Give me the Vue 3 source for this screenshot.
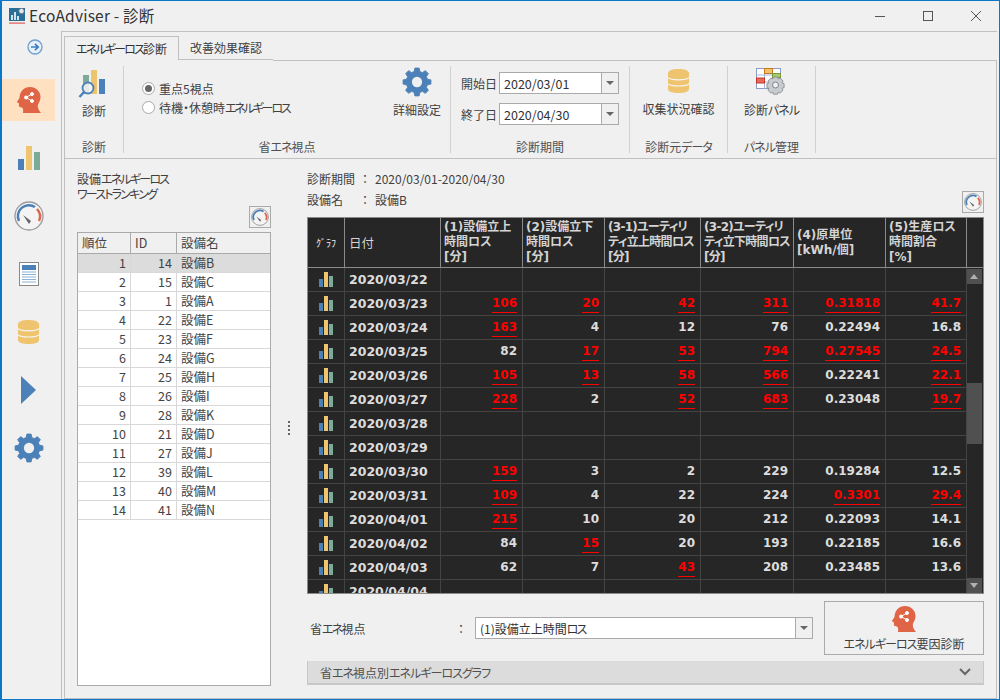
<template>
  <div class="window">
    <header class="titlebar">
      <svg class="app-logo" viewBox="0 0 16 16" width="16" height="16">
        <rect x="0" y="0" width="16" height="13" fill="#2a6f97" />
        <rect x="2" y="7" width="2" height="5" fill="#cfe3ee" />
        <rect x="5" y="4" width="2" height="8" fill="#cfe3ee" />
        <rect x="8" y="8" width="2" height="4" fill="#cfe3ee" />
        <circle cx="12.5" cy="3" r="2.6" fill="#e8e8e8" stroke="#777" stroke-width=".7" />
        <rect x="0" y="14.5" width="16" height="1.2" fill="#e05a5a" />
      </svg>
      <span class="app-title">EcoAdviser - 診断</span>
      <div class="win-btns">
        <svg viewBox="0 0 48 30" width="48" height="30"><path d="M20 15.500h10" stroke="#555" fill="none" /></svg>
        <svg viewBox="0 0 48 30" width="48" height="30"><rect x="20.500" y="10.500" width="9" height="9" stroke="#555" fill="none" /></svg>
        <svg viewBox="0 0 48 30" width="48" height="30"><path d="M20 10l10 10M30 10L20 20" stroke="#555" fill="none" /></svg>
      </div>
    </header>

    <div class="body">
      <aside class="sidebar">
        <svg class="nav-arrow" viewBox="0 0 16 16" width="16" height="16">
          <circle cx="8" cy="8" r="7" fill="#e8f0f8" stroke="#6f9fd0" stroke-width="1.3" />
          <path d="M4 8h6.5M8 4.8L11.2 8 8 11.2" fill="none" stroke="#3f7fbf" stroke-width="1.7" />
        </svg>
        <div class="nav-item active">
          <svg viewBox="0 0 26 28" width="26" height="28">
            <path :d="headPath" fill="#df6546" />
            <g fill="#fff" stroke="#fff">
              <circle cx="10" cy="11.500" r="1.500" />
              <circle cx="16" cy="8" r="1.500" />
              <circle cx="16" cy="15" r="1.500" />
              <path d="M10 11.500L16 8M10 11.500L16 15" fill="none" />
            </g>
          </svg>
        </div>
        <div class="nav-item">
          <svg viewBox="0 0 22 25" width="22" height="25">
            <rect x="0" y="13" width="6" height="11" fill="#4c80b8" />
            <rect x="8" y="0" width="6" height="24" fill="#efc46f" />
            <rect x="16" y="6" width="6" height="18" fill="#7eab97" />
          </svg>
        </div>
        <div class="nav-item">
          <svg viewBox="0 0 30 30" width="30" height="30">
            <circle cx="15" cy="15" r="14" fill="#f4f4f4" stroke="#999" stroke-width="1.300" />
            <path d="M5 20A11 11 0 0 1 21 6" fill="none" stroke="#4c80b8" stroke-width="2.500" />
            <path d="M23 8A11 11 0 0 1 25 20" fill="none" stroke="#e0654a" stroke-width="2.500" />
            <path d="M9 14l8 6-2 3z" fill="#666" />
          </svg>
        </div>
        <div class="nav-item">
          <svg viewBox="0 0 20 24" width="20" height="24">
            <rect x=".5" y=".5" width="19" height="23" fill="#fff" stroke="#888" />
            <rect x="3" y="3" width="14" height="5" fill="#4c80b8" />
            <path d="M3 10h14M3 12.500h14M3 15h14M3 17.500h14M3 20h14" stroke="#8db0d6" />
          </svg>
        </div>
        <div class="nav-item">
          <svg viewBox="0 0 24 26" width="23" height="26">
            <path d="M1 5c0-3 5-4.500 11-4.500S23 2 23 5v16c0 3-5 4.500-11 4.500S1 24 1 21z" fill="#efc46f" />
            <path d="M1 9.500c3 3 19 3 22 0M1 16c3 3 19 3 22 0" fill="none" stroke="#f5f5f5" stroke-width="1.200" />
          </svg>
        </div>
        <div class="nav-item">
          <svg viewBox="0 0 15 28" width="15" height="28"><path d="M0 0l15 14L0 28z" fill="#4c80b8" /></svg>
        </div>
        <div class="nav-item">
          <svg viewBox="0 0 32 32" width="30" height="30">
            <path :d="gearPath" fill="#4c80b8" stroke="#4c80b8" stroke-width="1" stroke-linejoin="round" />
            <circle cx="16" cy="16" r="5.500" fill="#f0f0f0" />
          </svg>
        </div>
      </aside>

      <main class="main">
        <nav class="tabs">
          <div class="tab on"><span class="ka">エネルギーロス</span>診断</div>
          <div class="tab">改善効果確認</div>
          <div class="tab-rest"></div>
        </nav>

        <section class="ribbon">
          <div class="group g1">
            <div class="group-body col">
              <svg viewBox="0 0 32 30" width="32" height="30">
                <rect x="5" y="7" width="6" height="19" fill="#7eab97" />
                <rect x="13" y="2" width="6" height="24" fill="#efc46f" />
                <rect x="21" y="11" width="6" height="15" fill="#4c80b8" />
                <circle cx="10" cy="20" r="5.500" fill="#f4f4f4" fill-opacity=".85" stroke="#4c80b8" stroke-width="1.800" />
                <path d="M6 24l-4.500 5" stroke="#4c80b8" stroke-width="2.500" />
              </svg>
              <span class="big-label">診断</span>
            </div>
            <div class="group-label">診断</div>
          </div>

          <div class="group g2">
            <div class="group-body row">
              <div class="radios">
                <label class="radio"><i class="dot on"></i>重点5視点</label>
                <label class="radio"><i class="dot"></i><span>待機・休憩時<span class="ka x">エネルギーロス</span></span></label>
              </div>
              <div class="col detail">
                <svg viewBox="0 0 32 32" width="30" height="30">
                  <path :d="gearPath" fill="#4c80b8" stroke="#4c80b8" stroke-width="1" stroke-linejoin="round" />
                  <circle cx="16" cy="16" r="5.500" fill="#f0f0f0" />
                </svg>
                <span class="big-label">詳細設定</span>
              </div>
            </div>
            <div class="group-label">省<span class="ka s">エネ</span>視点</div>
          </div>

          <div class="group g3">
            <div class="group-body dates">
              <div class="date-row">
                <span>開始日</span>
                <div class="combo date"><span class="combo-text">2020/03/01</span><i class="caret"></i></div>
              </div>
              <div class="date-row">
                <span>終了日</span>
                <div class="combo date"><span class="combo-text">2020/04/30</span><i class="caret"></i></div>
              </div>
            </div>
            <div class="group-label">診断期間</div>
          </div>

          <div class="group g4">
            <div class="group-body col">
              <svg viewBox="0 0 24 26" width="23" height="26">
                <path d="M1 5c0-3 5-4.500 11-4.500S23 2 23 5v16c0 3-5 4.500-11 4.500S1 24 1 21z" fill="#efc46f" />
                <path d="M1 9.500c3 3 19 3 22 0M1 16c3 3 19 3 22 0" fill="none" stroke="#f5f5f5" stroke-width="1.200" />
              </svg>
              <span class="big-label">収集状況確認</span>
            </div>
            <div class="group-label">診断元<span class="ka s">データ</span></div>
          </div>

          <div class="group g5">
            <div class="group-body col">
              <svg viewBox="0 0 32 28" width="32" height="28">
                <rect x=".5" y=".5" width="24" height="20" fill="#fff" stroke="#8a9cc8" />
                <path d="M.5 7h24M.5 14h24M8.500.5v20M16.500.5v20" stroke="#a8b6d8" fill="none" />
                <rect x="8.500" y=".5" width="8" height="5" fill="#f2c26b" stroke="#c8781e" />
                <rect x=".5" y="10" width="8" height="5" fill="#e8695c" stroke="#c0392b" />
                <rect x="16.500" y="5.500" width="8" height="4" fill="#a8c86a" stroke="#7a9a3a" />
                <path d="M17.500 9h4l.7 2 2-.9 2.800 2.800-.9 2 2 .7v4l-2 .7.9 2-2.800 2.800-2-.9-.7 2h-4l-.7-2-2 .9-2.800-2.800.9-2-2-.7v-4l2-.7-.9-2 2.800-2.800 2 .9z" fill="#c8ccd0" stroke="#7f858c" stroke-width=".8" />
                <circle cx="19.500" cy="17" r="3" fill="#f0f0f0" stroke="#7f858c" />
              </svg>
              <span class="big-label">診断<span class="ka s">パネル</span></span>
            </div>
            <div class="group-label"><span class="ka s">パネル</span>管理</div>
          </div>
        </section>

        <section class="content">
          <div class="left">
            <p class="left-title">設備<span class="ka">エネルギーロス</span><br /><span class="ka">ワーストランキング</span></p>
            <div class="gauge-line">
              <button class="gauge-btn" type="button">
                <svg viewBox="0 0 30 30" width="18" height="18">
                  <circle cx="15" cy="15" r="14" fill="#f4f4f4" stroke="#999" stroke-width="1.500" />
                  <path d="M5 20A11 11 0 0 1 21 6" fill="none" stroke="#4c80b8" stroke-width="3" />
                  <path d="M23 8A11 11 0 0 1 25 20" fill="none" stroke="#e0654a" stroke-width="3" />
                  <path d="M9 14l8 6-2 3z" fill="#666" />
                </svg>
              </button>
            </div>
            <div class="rank">
              <div class="rank-row head">
                <span>順位</span><span>ID</span><span>設備名</span>
              </div>
              <div v-for="(r, i) in ranks" :key="r[1]" class="rank-row" :class="{ sel: i === 0 }">
                <span class="num">{{ i + 1 }}</span><span class="num">{{ r[0] }}</span><span>{{ r[1] }}</span>
              </div>
            </div>
          </div>

          <div class="splitter"><i></i><i></i><i></i><i></i></div>

          <div class="right">
            <div class="info">
              <div class="info-row"><span class="k">診断期間</span><span class="c">：</span><span>2020/03/01-2020/04/30</span></div>
              <div class="info-row second">
                <span class="k">設備名</span><span class="c">：</span><span>設備B</span>
                <button class="gauge-btn push" type="button">
                  <svg viewBox="0 0 30 30" width="18" height="18">
                    <circle cx="15" cy="15" r="14" fill="#f4f4f4" stroke="#999" stroke-width="1.500" />
                    <path d="M5 20A11 11 0 0 1 21 6" fill="none" stroke="#4c80b8" stroke-width="3" />
                    <path d="M23 8A11 11 0 0 1 25 20" fill="none" stroke="#e0654a" stroke-width="3" />
                    <path d="M9 14l8 6-2 3z" fill="#666" />
                  </svg>
                </button>
              </div>
            </div>

            <div class="grid-wrap">
              <div class="grow ghead">
                <div class="gcell small">ｸﾞﾗﾌ</div>
                <div class="gcell">日付</div>
                <div v-for="h in heads" :key="h[0]" class="gcell" :class="{ tight: h[0].startsWith('(3') }">
                  <div>{{ h[0] }}<br />{{ h[1] }}<template v-if="h[2]"><br />{{ h[2] }}</template></div>
                </div>
                <div class="gcell"></div>
              </div>
              <div class="grid-lower">
                <div class="gbody">
                  <div v-for="row in rows" :key="row.d" class="grow">
                    <div class="gcell center">
                      <svg viewBox="0 0 14 15" width="14" height="15">
                        <rect x="0" y="7" width="4" height="8" fill="#4c80b8" />
                        <rect x="5" y="0" width="4" height="15" fill="#efc46f" />
                        <rect x="10" y="4" width="4" height="11" fill="#7eab97" />
                      </svg>
                    </div>
                    <div class="gcell date-cell">{{ row.d }}</div>
                    <div v-for="(v, n) in cells(row)" :key="n" class="gcell val">
                      <span :class="{ red: v.red }">{{ v.t }}</span>
                    </div>
                  </div>
                </div>
                <div class="scroll">
                  <div class="sbtn"><i class="up"></i></div>
                  <div class="track"><div class="thumb"></div></div>
                  <div class="sbtn"><i class="down"></i></div>
                </div>
              </div>
            </div>

            <div class="bottom">
              <span class="view-k">省<span class="ka">エネ</span>視点</span>
              <span class="view-c">：</span>
              <div class="combo view"><span class="combo-text">(1)設備立上時間<span class="ka">ロス</span></span><i class="caret"></i></div>
              <button class="cause" type="button">
                <svg viewBox="0 0 26 28" width="26" height="28">
                  <path :d="headPath" fill="#df6546" />
                  <g fill="#fff" stroke="#fff">
                    <circle cx="10" cy="11.500" r="1.500" />
                    <circle cx="16" cy="8" r="1.500" />
                    <circle cx="16" cy="15" r="1.500" />
                    <path d="M10 11.500L16 8M10 11.500L16 15" fill="none" />
                  </g>
                </svg>
                <span><span class="ka s">エネルギーロス</span>要因診断</span>
              </button>
            </div>

            <div class="expander">
              <span>省<span class="ka s">エネ</span>視点別<span class="ka s">エネルギーロスグラフ</span></span>
              <svg viewBox="0 0 12 8" width="12" height="8"><path d="M1 1l5 5 5-5" fill="none" stroke="#666" stroke-width="2" /></svg>
            </div>
          </div>
        </section>
      </main>
    </div>
  </div>
</template>

<script setup>
const ranks = [
  [14, '設備B'], [15, '設備C'], [1, '設備A'], [22, '設備E'], [23, '設備F'], [24, '設備G'], [25, '設備H'],
  [26, '設備I'], [28, '設備K'], [21, '設備D'], [27, '設備J'], [39, '設備L'], [40, '設備M'], [41, '設備N']
];

const heads = [
  ['(1)設備立上', '時間ロス', '[分]'],
  ['(2)設備立下', '時間ロス', '[分]'],
  ['(3-1)ユーティリ', 'ティ立上時間ロス', '[分]'],
  ['(3-2)ユーティリ', 'ティ立下時間ロス', '[分]'],
  ['(4)原単位', '[kWh/個]', ''],
  ['(5)生産ロス', '時間割合', '[%]']
];

// a trailing ! marks a value over its threshold
const rows = [
  { d: '2020/03/22' },
  { d: '2020/03/23', v: ['106!', '20!', '42!', '311!', '0.31818!', '41.7!'] },
  { d: '2020/03/24', v: ['163!', '4', '12', '76', '0.22494', '16.8'] },
  { d: '2020/03/25', v: ['82', '17!', '53!', '794!', '0.27545!', '24.5!'] },
  { d: '2020/03/26', v: ['105!', '13!', '58!', '566!', '0.22241', '22.1!'] },
  { d: '2020/03/27', v: ['228!', '2', '52!', '683!', '0.23048', '19.7!'] },
  { d: '2020/03/28' },
  { d: '2020/03/29' },
  { d: '2020/03/30', v: ['159!', '3', '2', '229', '0.19284', '12.5'] },
  { d: '2020/03/31', v: ['109!', '4', '22', '224', '0.3301!', '29.4!'] },
  { d: '2020/04/01', v: ['215!', '10', '20', '212', '0.22093', '14.1'] },
  { d: '2020/04/02', v: ['84', '15!', '20', '193', '0.22185', '16.6'] },
  { d: '2020/04/03', v: ['62', '7', '43!', '208', '0.23485', '13.6'] },
  { d: '2020/04/04' }
];

function cells(row) {
  const v = row.v || ['', '', '', '', '', ''];
  return v.map((s) => ({ t: s.replace('!', ''), red: s.endsWith('!') }));
}

// head profile looking left, used by the nav item and the big button
const headPath = 'M7 27c.4-3 .2-4.500-1-5.500-1.500-.4-2.500-.4-3-1.200-.3-1 .2-2.200-.2-3-.5-.5-2-.6-1.800-1.500L3.500 12C3.600 5.500 8 1 14 1c6 0 10.500 4.500 10.500 10 0 3.500-1.500 5.500-2.500 7.500-.8 2 .3 5.500 3 8.500z';

// eight tooth gear around (16,16)
function buildGear() {
  const pts = [];
  const teeth = 8;
  for (let i = 0; i < teeth; i++) {
    const a = (i / teeth) * Math.PI * 2 - Math.PI / 2;
    const step = (Math.PI * 2) / teeth;
    const list = [
      [11.5, a - step * 0.34],
      [15, a - step * 0.19],
      [15, a + step * 0.19],
      [11.5, a + step * 0.34]
    ];
    for (const [r, t] of list) {
      pts.push((16 + r * Math.cos(t)).toFixed(2) + ' ' + (16 + r * Math.sin(t)).toFixed(2));
    }
  }
  return 'M' + pts.join('L') + 'z';
}
const gearPath = buildGear();
</script>

<style>
html, body { margin: 0; background: #f0f0f0; }
</style>

<style scoped>
.window {
  width: 1000px;
  height: 700px;
  box-sizing: border-box;
  border: 1px solid #0a78c8;
  border-left-width: 2px;
  background: #f0f0f0;
  display: flex;
  flex-direction: column;
  overflow: hidden;
  font-family: "Noto Sans CJK JP", "Noto Sans", sans-serif;
  font-size: 12px;
  font-feature-settings: "palt";
  color: #404040;
}

.ka { letter-spacing: -1.8px; }
.ka.s { letter-spacing: -1px; }
.ka.x { letter-spacing: -2.2px; }

.titlebar {
  height: 30px;
  flex-shrink: 0;
  display: flex;
  align-items: center;
  padding-left: 7px;
}
.app-logo { margin-right: 4px; }
.app-title { font-size: 15.500px; color: #333; letter-spacing: 0.2px; padding-bottom: 3px; }
.win-btns { margin-left: auto; display: flex; }

.body { flex: 1; display: flex; min-height: 0; }

.sidebar {
  width: 60px;
  flex-shrink: 0;
  box-sizing: border-box;
  border-right: 1px solid #c0c0c0;
  display: flex;
  flex-direction: column;
  align-items: flex-start;
}
.nav-arrow { margin: 8px 0 0 25px; flex-shrink: 0; }
.nav-item {
  width: 53px;
  height: 58px;
  display: flex;
  align-items: center;
  justify-content: center;
  flex-shrink: 0;
}
.nav-item.active {
  height: 42px;
  background: #ffe0c0;
  margin: 24px 0 8px;
}

.main {
  flex: 1;
  margin-right: 2px;
  display: flex;
  flex-direction: column;
  min-width: 0;
  border-top: 1px solid #c0c0c0;
  padding-left: 2px;
}

.tabs { display: flex; height: 26px; flex-shrink: 0; padding-top: 2px; box-sizing: content-box; }
.tab {
  height: 24px;
  padding: 0 11px;
  line-height: 23px;
  box-sizing: border-box;
  border-bottom: 1px solid #c0c0c0;
  margin-top: 2px;
}
.tab.on {
  width: 115px;
  padding: 0;
  text-align: center;
  border: 1px solid #c0c0c0;
  border-bottom: 0;
  color: #333;
}
.tab-rest { flex: 1; border-bottom: 1px solid #c0c0c0; height: 24px; margin-top: 2px; }

.ribbon {
  height: 99px;
  flex-shrink: 0;
  display: flex;
  border-left: 1px solid #c0c0c0;
  border-right: 1px solid #c0c0c0;
  border-bottom: 1px solid #c0c0c0;
  box-sizing: border-box;
  padding-top: 6px;
  padding-bottom: 5px;
}
.group {
  flex-shrink: 0;
  border-right: 1px solid #d0d0d0;
  box-sizing: border-box;
  display: flex;
  flex-direction: column;
}
.group-body { flex: 1; min-height: 0; }
.group-label { text-align: center; height: 15px; line-height: 17px; color: #505050; margin-top: auto; }
.g1 { width: 59px; }
.g2 { width: 327px; }
.g3 { width: 179px; }
.g4 { width: 98px; }
.g5 { width: 88px; }
.col { display: flex; flex-direction: column; align-items: center; }
.g1 .col, .g4 .col, .g5 .col { padding-top: 2px; }
.g4 .big-label { margin-top: 5px; }
.g5 .big-label { margin-top: 4px; }
.big-label { margin-top: 3px; color: #404040; line-height: 20px; }
.row { display: flex; }
.radios { padding: 14px 0 0 18px; display: flex; flex-direction: column; gap: 2px; }
.radio { display: flex; align-items: center; height: 17px; gap: 4px; white-space: nowrap; }
.dot {
  width: 13px;
  height: 13px;
  border-radius: 50%;
  border: 1px solid #aaa;
  background: #fff;
  box-sizing: border-box;
  display: block;
  position: relative;
}
.dot.on::after {
  content: "";
  position: absolute;
  inset: 2px;
  border-radius: 50%;
  background: #666;
}
.detail { margin-left: auto; margin-right: 3px; width: 60px; padding-top: 1px; }
.detail .big-label { margin-top: 3px; }

.dates { padding: 6px 0 0 10px; display: flex; flex-direction: column; gap: 9px; }
.date-row { display: flex; align-items: center; gap: 2px; }
.combo {
  display: flex;
  align-items: center;
  height: 22px;
  box-sizing: border-box;
  border: 1px solid #aaa;
  background: #fff;
  color: #333;
}
.combo.date { width: 120px; }
.combo.date .combo-text { font-size: 12.500px; }
.combo-text { flex: 1; padding-left: 4px; }
.caret {
  width: 16px;
  height: 100%;
  background: #f0f0f0;
  border-left: 1px solid #aaa;
  position: relative;
  flex-shrink: 0;
}
.caret::after {
  content: "";
  position: absolute;
  left: 4px;
  top: 8px;
  border: 4px solid transparent;
  border-top: 4px solid #666;
  border-bottom: 0;
}

.content {
  flex: 1;
  min-height: 0;
  display: flex;
  border-left: 1px solid #c0c0c0;
  border-right: 1px solid #c0c0c0;
  border-bottom: 1px solid #c0c0c0;
}

.left { width: 194px; margin-left: 12px; padding-top: 12px; display: flex; flex-direction: column; flex-shrink: 0; }
.left-title { margin: 0; line-height: 15px; }
.gauge-line { display: flex; justify-content: flex-end; margin-top: 5px; height: 26px; }
.gauge-btn {
  width: 22px;
  height: 22px;
  padding: 0;
  border: 1px solid #aaa;
  background: #f0f0f0;
  display: flex;
  align-items: center;
  justify-content: center;
}
.push { margin-left: auto; }

.rank {
  flex: 1;
  background: #fff;
  border: 1px solid #aaa;
  margin-bottom: 12px;
  box-sizing: border-box;
}
.rank-row {
  display: grid;
  grid-template-columns: 53px 46px 1fr;
  height: 19px;
  box-sizing: border-box;
  border-bottom: 1px solid #d8d8d8;
  line-height: 18px;
  font-size: 12.500px;
  color: #444;
}
.rank-row span { padding: 0 4px; border-right: 1px solid #d8d8d8; }
.rank-row span:last-child { border-right: 0; }
.rank-row .num { text-align: right; }
.rank-row.head {
  height: 21px;
  background: #f0f0f0;
  border-bottom: 1px solid #aaa;
  line-height: 19px;
}
.rank-row.head span { border-right-color: #aaa; }
.rank-row.sel { background: #dcdcdc; }

.splitter {
  width: 36px;
  flex-shrink: 0;
  display: flex;
  flex-direction: column;
  align-items: center;
  padding-top: 262px;
  gap: 2px;
  box-sizing: border-box;
}
.splitter i { width: 2px; height: 2px; background: #666; display: block; }

.right { flex: 1; min-width: 0; display: flex; flex-direction: column; padding: 12px 12px 0 0; }
.info { height: 46px; flex-shrink: 0; }
.info-row { display: flex; align-items: center; height: 15px; }
.info-row.second { height: 22px; margin-top: 5px; align-items: flex-start; line-height: 18px; }
.info-row .k { width: 55px; }
.info-row .c { width: 13px; }

.grid-wrap {
  display: flex;
  flex-direction: column;
  height: 377px;
  box-sizing: border-box;
  border: 1px solid #8a8a8a;
  background: #262626;
  overflow: hidden;
  flex-shrink: 0;
}
.grid-lower { flex: 1; min-height: 0; display: flex; }
.grow {
  display: grid;
  grid-template-columns: 37px 96px 82px 82px 96px 93px 92px 81px;
  height: 24px;
  flex-shrink: 0;
  border-bottom: 1px solid #444;
  box-sizing: border-box;
}
.ghead {
  height: 50px;
  border-bottom: 1px solid #8a8a8a;
  grid-template-columns: 37px 96px 82px 82px 96px 93px 92px 81px 16px;
}
.gbody { overflow: hidden; width: 659px; flex-shrink: 0; }
.gcell {
  border-right: 1px solid #444;
  color: #ddd;
  box-sizing: border-box;
  overflow: hidden;
}
.ghead .gcell {
  border-right-color: #8a8a8a;
  padding-left: 3px;
  display: flex;
  align-items: center;
  line-height: 15px;
  white-space: nowrap;
  color: #d4d4d4;
  font-family: "DejaVu Sans", "Noto Sans CJK JP", sans-serif;
  font-size: 12px;
  font-weight: 700;
}
.ghead .tight { letter-spacing: -0.7px; }
.ghead .gcell:first-child { padding-left: 0; justify-content: center; }
.ghead .small { font-size: 10px; font-weight: 400; font-family: "Noto Sans CJK JP", sans-serif; color: #eee; }
.ghead .gcell:nth-child(2) { font-weight: 400; font-family: "Noto Sans CJK JP", sans-serif; padding-left: 4px; font-size: 12.500px; }
.ghead .gcell:last-child { border-right: 0; }
.center { display: flex; align-items: center; justify-content: center; }
.date-cell, .val {
  font-family: "DejaVu Sans", "Noto Sans CJK JP", sans-serif;
  font-weight: 700;
  font-size: 12.500px;
  line-height: 23px;
  font-feature-settings: normal;
}
.date-cell { padding-left: 4px; }
.val { text-align: right; padding-right: 5px; font-size: 12px; }
.red { color: #ff0000; border-bottom: 1px solid #ff0000; display: inline-block; line-height: 15px; padding-bottom: 1px; }

.scroll { flex: 1; display: flex; flex-direction: column; padding-top: 1px; box-sizing: border-box; }
.sbtn { width: 15px; height: 15px; background: #505050; position: relative; flex-shrink: 0; }
.sbtn i { position: absolute; left: 3px; top: 5px; border: 4px solid transparent; border-top: 0; border-bottom: 5px solid #b0b0b0; }
.sbtn i.down { border-bottom: 0; border-top: 5px solid #b0b0b0; }
.track { flex: 1; width: 15px; padding-top: 99px; box-sizing: border-box; }
.thumb { height: 61px; background: #505050; }

.bottom { display: flex; align-items: center; margin-top: 7px; height: 54px; flex-shrink: 0; }
.view-k { width: 151px; padding-left: 3px; box-sizing: border-box; }
.view-c { width: 17px; }
.combo.view { width: 338px; }
.cause {
  margin-left: auto;
  width: 160px;
  height: 54px;
  padding: 0 0 2px;
  border: 1px solid #aaa;
  background: #f0f0f0;
  font: inherit;
  color: #404040;
  display: flex;
  flex-direction: column;
  align-items: center;
  justify-content: flex-end;
  gap: 2px;
}
.expander {
  margin-top: 6px;
  height: 24px;
  box-sizing: border-box;
  background: #dcdcdc;
  border: 1px solid #c8c8c8;
  border-top: 0;
  border-bottom: 2px solid #c8c8c8;
  display: flex;
  align-items: center;
  justify-content: space-between;
  padding: 0 12px;
  color: #505050;
  flex-shrink: 0;
}
</style>
